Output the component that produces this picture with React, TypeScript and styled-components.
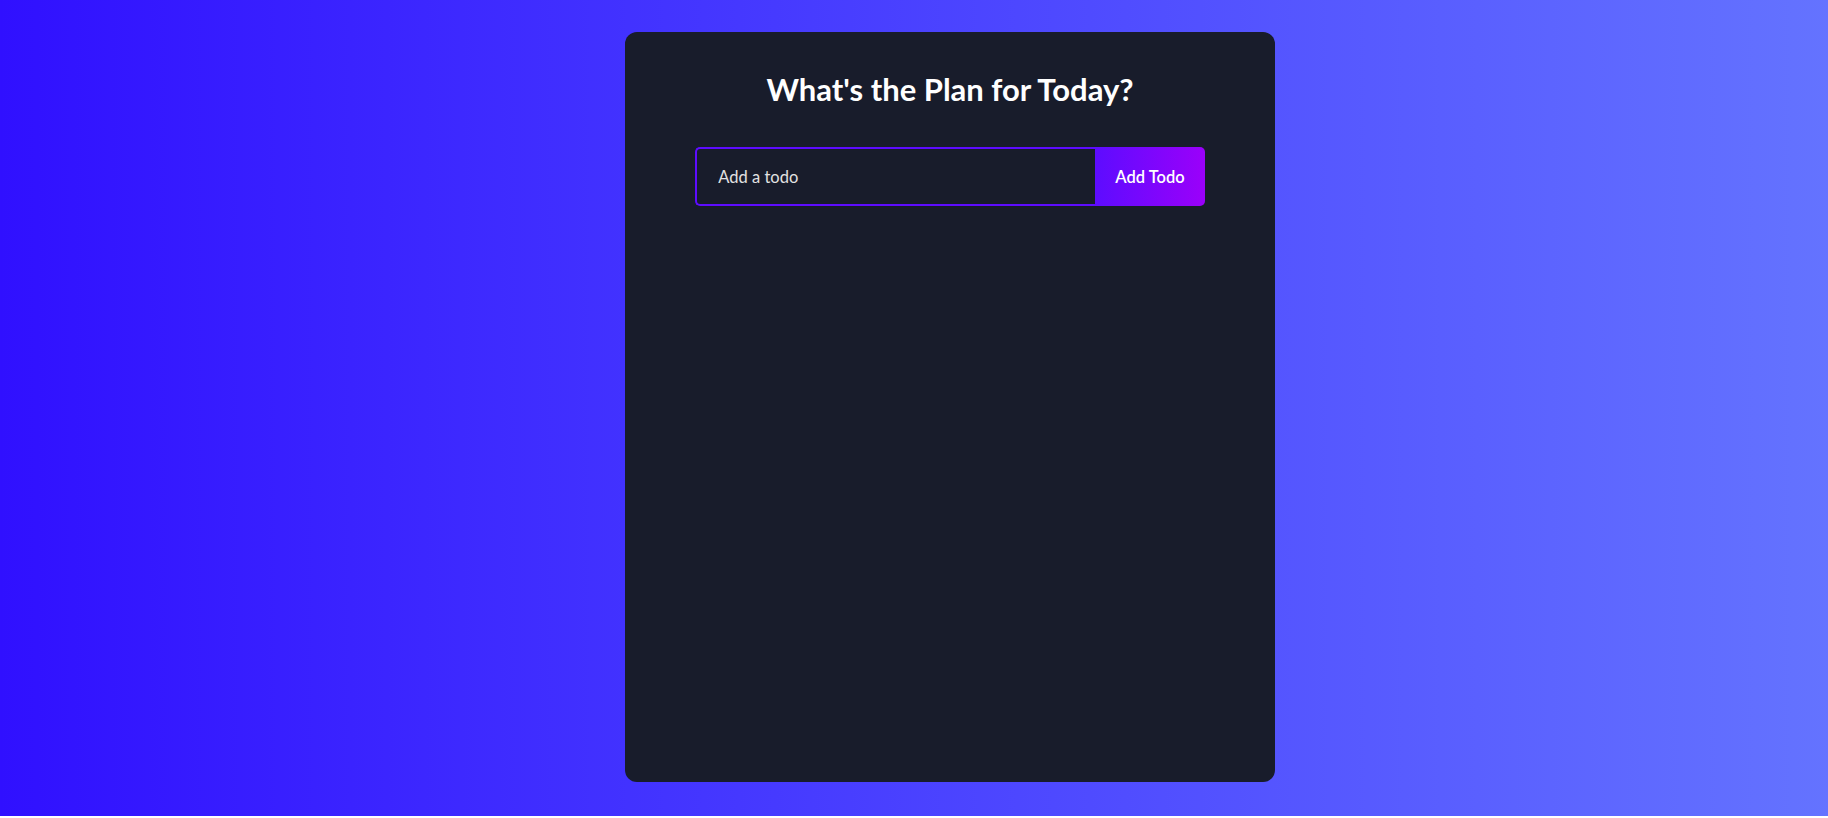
import { useState } from 'react'
import styled, { createGlobalStyle } from 'styled-components'

const GlobalStyle = createGlobalStyle`
  * {
    box-sizing: border-box;
  }

  body {
    margin: 0;
    font-family: 'Trebuchet MS', 'Lato', 'Liberation Sans', sans-serif;
  }
`

const Page = styled.div`
  height: 816px;
  padding: 32px 0 0 72px;
  background: linear-gradient(90deg, rgba(48, 16, 255, 1) 0%, rgba(100, 115, 255, 1) 100%);
`

const TodoApp = styled.div`
  display: flex;
  flex-direction: column;
  align-items: center;
  width: 650px;
  height: 750px;
  margin: 0 auto;
  background: #181c2b;
  border-radius: 12px;
`

const Title = styled.h1`
  margin: 39px 0 40px;
  color: #fff;
  font-size: 31px;
  font-weight: 700;
  line-height: 36px;
`

const TodoForm = styled.form`
  display: flex;
`

const TodoInput = styled.input`
  width: 400px;
  height: 59px;
  padding: 0 40px 0 21px;
  border: 2.5px solid #5d0cff;
  border-right: none;
  border-radius: 5px 0 0 5px;
  outline: none;
  background: transparent;
  color: #fff;
  font-family: inherit;
  font-size: 16.5px;

  &::placeholder {
    color: #e2e2e2;
  }
`

const TodoButton = styled.button`
  height: 59px;
  padding: 0 20px;
  border: none;
  border-radius: 0 5px 5px 0;
  background: linear-gradient(90deg, rgba(93, 12, 255, 1) 0%, rgba(155, 0, 250, 1) 100%);
  color: #fff;
  font-family: inherit;
  font-size: 16.5px;
  font-weight: 600;
  cursor: pointer;
`

export default function App() {
  const [input, setInput] = useState('')

  return (
    <>
      <GlobalStyle />
      <Page>
        <TodoApp>
          <Title>What's the Plan for Today?</Title>
          <TodoForm onSubmit={e => e.preventDefault()}>
            <TodoInput
              placeholder="Add a todo"
              value={input}
              onChange={e => setInput(e.target.value)}
            />
            <TodoButton type="submit">Add Todo</TodoButton>
          </TodoForm>
        </TodoApp>
      </Page>
    </>
  )
}
